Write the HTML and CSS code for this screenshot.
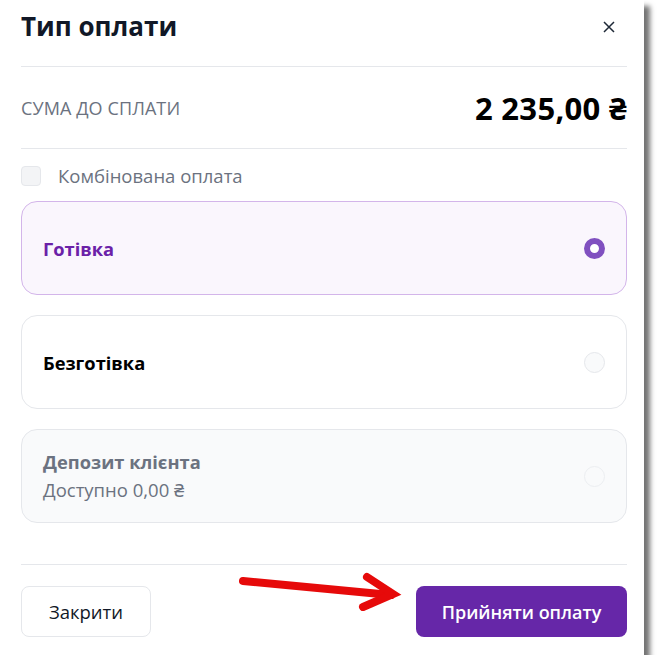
FILE: index.html
```html
<!DOCTYPE html>
<html lang="uk">
<head>
<meta charset="utf-8">
<title>Тип оплати</title>
<link rel="stylesheet" href="styles.css">
</head>
<body>
<div class="panel">
  <div class="header">
    <h1 class="title">Тип оплати</h1>
    <button class="close" aria-label="Закрити">
      <svg width="12" height="12" viewBox="0 0 12 12"><path d="M1 1L11 11M11 1L1 11" stroke="#1f2937" stroke-width="1.5" fill="none"/></svg>
    </button>
  </div>
  <div class="sum-row">
    <span class="sum-label">СУМА ДО СПЛАТИ</span>
    <span class="sum-value">2 235,00 ₴</span>
  </div>
  <label class="combo">
    <span class="checkbox"></span>
    <span class="combo-label">Комбінована оплата</span>
  </label>
  <div class="cards">
    <div class="card card-active">
      <div class="card-text"><div class="card-title">Готівка</div></div>
      <span class="radio radio-on"></span>
    </div>
    <div class="card">
      <div class="card-text"><div class="card-title">Безготівка</div></div>
      <span class="radio"></span>
    </div>
    <div class="card card-disabled">
      <div class="card-text">
        <div class="card-title">Депозит клієнта</div>
        <div class="card-sub">Доступно 0,00 ₴</div>
      </div>
      <span class="radio radio-dis"></span>
    </div>
  </div>
  <div class="footer">
    <button class="btn btn-secondary">Закрити</button>
    <button class="btn btn-primary">Прийняти оплату</button>
  </div>
  <svg class="arrow" width="180" height="50" viewBox="0 0 180 50">
    <g stroke="#e60a0a" stroke-width="8" stroke-linecap="round" fill="none">
      <path d="M6 20L154 34"/>
      <path d="M130 16L156 33L126 46"/>
    </g>
  </svg>
</div>
</body>
</html>
```
FILE: styles.css
```css
* { box-sizing: border-box; }
html, body { margin: 0; padding: 0; background: #ffffff; }
body { font-family: "Open Sans", "Noto Sans", sans-serif; color: #111827; }
.panel {
  position: relative;
  width: 644px;
  height: 655px;
  background: #ffffff;
  padding: 0 17px 0 21px;
  box-shadow: 6px 6px 5px rgba(0,0,0,0.55);
}
.header {
  height: 67px;
  display: flex;
  justify-content: space-between;
  align-items: flex-start;
  padding-top: 7px;
  border-bottom: 1px solid #e5e7eb;
}
.title {
  margin: 0;
  font-size: 26px;
  font-weight: 700;
  line-height: 38px;
  color: #111827;
}
.close {
  border: 0;
  background: transparent;
  padding: 0;
  margin-top: 14px;
  margin-right: 12px;
  width: 12px;
  height: 12px;
  display: flex;
}
.sum-row {
  height: 82px;
  display: flex;
  align-items: center;
  justify-content: space-between;
  border-bottom: 1px solid #e5e7eb;
}
.sum-label { font-size: 18px; color: #6b7280; letter-spacing: 0.1px; }
.sum-value { font-size: 31px; font-weight: 700; color: #000; letter-spacing: 0.3px; }
.combo {
  display: flex;
  align-items: center;
  gap: 17px;
  margin-top: 17px;
  height: 20px;
}
.checkbox {
  width: 20px;
  height: 20px;
  border-radius: 4px;
  background: #f3f4f6;
  border: 1px solid #e5e7eb;
}
.combo-label { font-size: 18.5px; color: #6b7280; line-height: 20px; }
.cards {
  display: flex;
  flex-direction: column;
  gap: 20px;
  margin-top: 15px;
}
.card {
  height: 94px;
  border: 1px solid #e5e7eb;
  border-radius: 16px;
  background: #ffffff;
  display: flex;
  align-items: center;
  justify-content: space-between;
  padding: 0 21px 0 21px;
}
.card-title { font-size: 18.3px; font-weight: 700; color: #000; line-height: 27px; }
.card-active { background: #faf6fd; border-color: #d3b5ea; }
.card-active .card-title { color: #6b21a8; }
.card-disabled { background: #f9fafb; }
.card-disabled .card-title { color: #6b7280; }
.card-sub { font-size: 18.5px; color: #6b7280; line-height: 29px; }
.radio {
  width: 21px;
  height: 21px;
  border-radius: 50%;
  border: 1px solid #e5e7eb;
  background: #f9fafb;
}
.radio-on {
  border: 6px solid #8050c0;
  background: #ffffff;
}
.radio-dis { background: #f9fafb; border-color: #eceef1; }
.footer {
  position: absolute;
  left: 21px;
  right: 17px;
  top: 564px;
  border-top: 1px solid #e5e7eb;
  padding-top: 21px;
  display: flex;
  justify-content: space-between;
}
.btn {
  height: 51px;
  border-radius: 8px;
  font-family: "Open Sans", "Noto Sans", sans-serif;
  font-size: 18.5px;
  padding: 0;
}
.btn-secondary {
  width: 130px;
  background: #ffffff;
  border: 1px solid #e5e7eb;
  color: #111827;
}
.btn-primary {
  width: 211px;
  background: #6627a8;
  border: 0;
  color: #ffffff;
  font-weight: 600;
  font-size: 18px;
}
.arrow {
  position: absolute;
  left: 237px;
  top: 561px;
}
```
